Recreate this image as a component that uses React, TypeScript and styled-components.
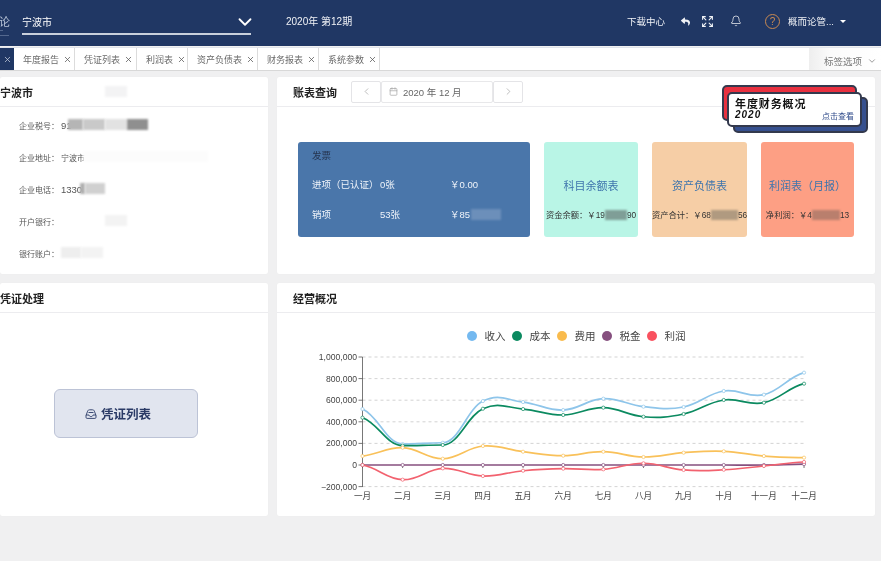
import React from "react";
import styled, { createGlobalStyle } from "styled-components";
import { Bell, Calendar, ChevronDown, ChevronLeft, ChevronRight, Expand, X } from "lucide-react";
import { FaReply } from "react-icons/fa";

const GlobalStyle = createGlobalStyle`
    html, body {
        margin: 0;
        padding: 0;
        background: #f0f0f1;
        overflow: hidden;
    }
    body, button {
        font-family: "Liberation Sans", "Noto Sans CJK SC", sans-serif;
    }
`;

const Page = styled.div`
    position: relative;
    width: 881px;
    height: 561px;
    overflow: hidden;
    background: #f0f0f1;
    filter: blur(0.3px);
`;

const Header = styled.header`
    position: relative;
    height: 46px;
    background: #203764;
    color: #fff;
`;

const LogoGlyph = styled.div`
    position: absolute;
    left: -1px;
    top: 14px;
    font-size: 11px;
    line-height: 16px;
    color: #b9c4d8;
`;

const LogoLine = styled.div`
    position: absolute;
    left: 0;
    top: ${(p: { $top: number; $width: number }) => p.$top}px;
    width: ${(p: { $top: number; $width: number }) => p.$width}px;
    height: 1px;
    background: #54688e;
`;

const CompanySelect = styled.div`
    position: absolute;
    left: 22px;
    top: 10px;
    width: 229px;
    height: 23px;
    border-bottom: 2px solid #c9d0dc;
    display: flex;
    align-items: center;
    justify-content: space-between;
    font-size: 10px;
    svg {
        margin-right: -5px;
    }
`;

const Period = styled.div`
    position: absolute;
    left: 286px;
    top: 15px;
    font-size: 10px;
    line-height: 14px;
    color: #f0f2f6;
`;

const HeaderTools = styled.div`
    position: absolute;
    top: 0;
    left: 627px;
    height: 42px;
    font-size: 9.5px;
    color: #f1f3f7;
`;

const ToolItem = styled.div`
    position: absolute;
    top: 0;
    left: ${(p: { $left: number }) => p.$left}px;
    height: 42px;
    display: flex;
    align-items: center;
    white-space: nowrap;
    gap: 4px;
`;

const HelpCircle = styled.span`
    width: 13px;
    height: 13px;
    border: 1px solid #c98a52;
    border-radius: 50%;
    color: #c98a52;
    font-size: 10px;
    line-height: 13px;
    text-align: center;
`;

const UserName = styled.span`
    margin-left: 4px;
`;

const Caret = styled.span`
    width: 0;
    height: 0;
    margin-left: 2px;
    border-left: 3px solid transparent;
    border-right: 3px solid transparent;
    border-top: 3px solid #fff;
`;

const TabBar = styled.nav`
    position: absolute;
    top: 47px;
    left: 0;
    right: 0;
    height: 24px;
    display: flex;
    background: #fff;
    border-top: 1px solid #dfe3ea;
    border-bottom: 1px solid #d8d8d8;
    box-sizing: border-box;
`;

const ActiveTab = styled.div`
    width: 14px;
    background: #203764;
    color: #c8d0df;
    display: flex;
    align-items: center;
    justify-content: center;
`;

const Tab = styled.div`
    width: ${(p: { $width: number }) => p.$width}px;
    box-sizing: border-box;
    border-right: 1px solid #dcdcdc;
    display: flex;
    align-items: center;
    padding-left: 9px;
    gap: 4px;
    font-size: 9px;
    color: #6a6a6a;
`;

const TabOptions = styled.div`
    position: absolute;
    right: 0;
    top: 0;
    bottom: 0;
    width: 72px;
    box-sizing: border-box;
    padding: 3px 0 0 15px;
    display: flex;
    align-items: center;
    gap: 5px;
    font-size: 9.5px;
    color: #777;
    background: linear-gradient(90deg, #eeeeee, #fbfbfb 30%, #fff);
`;

const Board = styled.main`
    position: absolute;
    left: 0;
    top: 77px;
    display: grid;
    grid-template-columns: 268px 598px;
    grid-template-rows: 197px 233px;
    column-gap: 9px;
    row-gap: 9px;
`;

const Card = styled.section`
    position: relative;
    background: #fff;
    border-radius: 2px;
    overflow: hidden;
    box-shadow: 0 0 1px rgba(0, 0, 0, 0.06);
`;

const CardHead = styled.div`
    height: 30px;
    box-sizing: border-box;
    border-bottom: 1px solid #ececef;
    display: flex;
    align-items: center;
    padding-left: ${(p: { $pad: number }) => p.$pad}px;
    font-size: 11px;
    font-weight: 700;
    color: #222;
`;

const InfoList = styled.div`
    padding: 2px 0 0 19px;
`;

const InfoRow = styled.div`
    position: relative;
    height: 32px;
    display: flex;
    align-items: center;
    font-size: 8px;
    color: #555;
    white-space: nowrap;
`;

const InfoLabel = styled.span`
    width: 42px;
    flex: none;
`;

const InfoNumber = styled.span`
    font-size: 9.5px;
`;

const Smudge = styled.span<{ $w: number; $x: number; $color: string }>`
    position: absolute;
    left: ${(p) => p.$x}px;
    top: 50%;
    width: ${(p) => p.$w}px;
    height: 11px;
    margin-top: -6px;
    background: ${(p) => p.$color};
    filter: blur(1px);
`;

const HeadSmudge = styled(Smudge)`
    top: 15px;
`;

const Pager = styled.div`
    display: flex;
    margin-left: 14px;
    font-weight: 400;
`;

const PagerButton = styled.div`
    width: 30px;
    height: 22px;
    box-sizing: border-box;
    border: 1px solid #e4e4e7;
    border-radius: 2px;
    display: flex;
    align-items: center;
    justify-content: center;
    color: #8a8a8a;
`;

const DateBox = styled.div`
    width: 112px;
    height: 22px;
    box-sizing: border-box;
    border: 1px solid #e8e8ea;
    border-radius: 2px;
    display: flex;
    align-items: center;
    gap: 5px;
    padding-left: 7px;
    font-size: 9.5px;
    color: #666;
`;

const ReportBadge = styled.div`
    position: absolute;
    left: 445px;
    top: 8px;
    width: 146px;
    height: 48px;
`;

const BadgeLayer = styled.div<{ $x: number; $y: number; $w: number; $h: number; $bg: string }>`
    position: absolute;
    left: ${(p) => p.$x}px;
    top: ${(p) => p.$y}px;
    width: ${(p) => p.$w}px;
    height: ${(p) => p.$h}px;
    box-sizing: border-box;
    background: ${(p) => p.$bg};
    border: 2px solid #33394d;
    border-radius: 5px;
`;

const BadgeTitle = styled.div`
    position: absolute;
    left: 6px;
    top: 4px;
    font-size: 11px;
    line-height: 12px;
    font-weight: 700;
    letter-spacing: 0.9px;
    color: #111;
`;

const BadgeYear = styled.div`
    position: absolute;
    left: 6px;
    top: 15px;
    font-size: 10px;
    line-height: 12px;
    font-weight: 700;
    font-style: italic;
    letter-spacing: 1px;
    color: #111;
`;

const BadgeLink = styled.div`
    position: absolute;
    right: 6px;
    top: 18px;
    font-size: 8px;
    line-height: 10px;
    color: #2f4b8a;
`;

const InvoicePanel = styled.div`
    position: absolute;
    left: 21px;
    top: 65px;
    width: 232px;
    height: 95px;
    border-radius: 3px;
    background: #4a76aa;
    color: #f0f4fa;
    font-size: 9.5px;
`;

const InvoiceTitle = styled.div`
    position: absolute;
    left: 14px;
    top: 7px;
    line-height: 14px;
    color: #25344f;
`;

const InvoiceRow = styled.div`
    position: absolute;
    left: 14px;
    top: ${(p: { $top: number }) => p.$top}px;
    display: grid;
    grid-template-columns: 68px 70px 1fr;
    width: 210px;
    line-height: 14px;
`;

const StatCard = styled.div<{ $x: number; $w: number; $bg: string }>`
    position: absolute;
    left: ${(p) => p.$x}px;
    top: 65px;
    width: ${(p) => p.$w}px;
    height: 95px;
    border-radius: 3px;
    background: ${(p) => p.$bg};
    overflow: hidden;
`;

const StatTitle = styled.div`
    position: absolute;
    left: 0;
    right: 0;
    top: 36px;
    text-align: center;
    font-size: 11px;
    line-height: 16px;
    color: #3f75ad;
`;

const StatLine = styled.div`
    position: absolute;
    left: 0;
    right: 0;
    top: 67px;
    display: flex;
    justify-content: center;
    white-space: nowrap;
    font-size: 8.3px;
    line-height: 12px;
    color: #333;
`;

const StatGap = styled.span<{ $w: number; $color: string }>`
    flex: none;
    width: ${(p) => p.$w}px;
    height: 10px;
    margin-top: 1px;
    background: ${(p) => p.$color};
    filter: blur(1px);
`;

const InvoiceSmudge = styled.span`
    position: absolute;
    left: 173px;
    top: 67px;
    width: 30px;
    height: 11px;
    background: #6c8fba;
    filter: blur(1px);
`;

const VoucherButton = styled.button`
    position: absolute;
    left: 54px;
    top: 106px;
    width: 144px;
    height: 49px;
    box-sizing: border-box;
    background: #e1e5ef;
    border: 1px solid #bcc3d6;
    border-radius: 6px;
    display: flex;
    align-items: center;
    gap: 4px;
    padding: 0 0 0 30px;
    font-size: 12.5px;
    font-weight: 700;
    color: #2a3a66;
`;

const ChartSvg = styled.svg`
    position: absolute;
    left: 0;
    top: 0;
    width: 598px;
    height: 233px;
    font-family: "Liberation Sans", "Noto Sans CJK SC", sans-serif;
`;

const months = ["一月", "二月", "三月", "四月", "五月", "六月", "七月", "八月", "九月", "十月", "十一月", "十二月"];

// flat: months where the curve runs level through the point
const series = [
    { name: "税金", color: "#86507f", flat: [], data: [0, 0, 0, 0, 0, 0, 0, 0, 0, 0, 0, 8000] },
    { name: "收入", color: "#8ec5ea", flat: [1, 2], data: [518000, 194000, 206000, 592000, 583000, 509000, 614000, 540000, 537000, 685000, 651000, 855000] },
    { name: "成本", color: "#0b8a60", flat: [1, 2], data: [438000, 179000, 185000, 521000, 518000, 463000, 531000, 447000, 472000, 602000, 577000, 753000] },
    { name: "费用", color: "#f9c15a", flat: [], data: [83000, 160000, 58000, 176000, 123000, 86000, 123000, 74000, 114000, 127000, 83000, 68000] },
    { name: "利润", color: "#f2626f", flat: [], data: [0, -136000, -31000, -102000, -53000, -34000, -40000, 16000, -46000, -44000, -9000, 28000] },
];

const legendOrder = [
    { name: "收入", color: "#74b9f0", x: 472 },
    { name: "成本", color: "#0b8a60", x: 517 },
    { name: "费用", color: "#f9bb4d", x: 562 },
    { name: "税金", color: "#86507f", x: 607 },
    { name: "利润", color: "#f9515f", x: 652 },
];

const axisX = (i: number) => 362.5 + i * 40.14;
const axisY = (v: number) => 465 - (v / 200000) * 21.6;

function smoothPath(data: number[], flat: number[]) {
    const pts = data.map((v, i) => [axisX(i), axisY(v)]);
    const k = 0.2;
    const slope = (i: number) => {
        if (flat.includes(i)) return 0;
        const a = pts[Math.max(i - 1, 0)];
        const b = pts[Math.min(i + 1, pts.length - 1)];
        return (b[1] - a[1]) * k;
    };
    let d = `M${pts[0][0]} ${pts[0][1]}`;
    for (let i = 0; i < pts.length - 1; i++) {
        const p1 = pts[i];
        const p2 = pts[i + 1];
        const dx = (p2[0] - p1[0]) * 0.4;
        d += `C${p1[0] + dx} ${p1[1] + slope(i)} ${p2[0] - dx} ${p2[1] - slope(i + 1)} ${p2[0]} ${p2[1]}`;
    }
    return d;
}

function OverviewChart() {
    const ticks = [1000000, 800000, 600000, 400000, 200000, 0, -200000];
    return (
        <ChartSvg viewBox="277 283 598 233">
            {legendOrder.map((l) => (
                <g key={l.name}>
                    <circle cx={l.x} cy={336} r={5} fill={l.color} />
                    <text x={l.x + 12.5} y={340} fontSize={10.5} fill="#444">{l.name}</text>
                </g>
            ))}
            {ticks.map((t) => (
                <g key={t}>
                    {t !== 0 && (
                        <line x1={362.5} x2={804} y1={axisY(t)} y2={axisY(t)} stroke="#c8c8c8" strokeWidth={0.8} strokeDasharray="3 3" />
                    )}
                    <line x1={358.5} x2={362.5} y1={axisY(t)} y2={axisY(t)} stroke="#555" strokeWidth={0.8} />
                    <text x={357} y={axisY(t) + 3} fontSize={8.6} fill="#444" textAnchor="end">
                        {t.toLocaleString("en-US").replace("-", "\u2212")}
                    </text>
                </g>
            ))}
            <line x1={362.5} x2={362.5} y1={357} y2={487} stroke="#555" strokeWidth={0.8} />
            {months.map((m, i) => (
                <g key={m}>
                    <line x1={axisX(i)} x2={axisX(i)} y1={465} y2={468} stroke="#555" strokeWidth={0.8} />
                    <text x={axisX(i)} y={499} fontSize={8.6} fill="#444" textAnchor="middle">{m}</text>
                </g>
            ))}
            {series.map((s) => (
                <g key={s.name}>
                    <path d={smoothPath(s.data, s.flat)} fill="none" stroke={s.color} strokeWidth={1.7} />
                    {s.data.map((v, i) => (
                        <circle key={i} cx={axisX(i)} cy={axisY(v)} r={1.6} fill="#fff" stroke={s.color} strokeWidth={0.7} />
                    ))}
                </g>
            ))}
        </ChartSvg>
    );
}

function InboxIcon() {
    return (
        <svg width="12" height="12" viewBox="0 0 12 12" fill="none" stroke="#2a3a66" strokeWidth="0.9">
            <path d="M1.2 7 2.6 3.2C3 2.2 3.6 1.8 4.5 1.8h3c.9 0 1.5.4 1.9 1.4L10.8 7" />
            <path d="M1 7h3c.2 1 1 1.6 2 1.6S7.8 8 8 7h3v2.3c0 .7-.4 1.1-1.1 1.1H2.1C1.4 10.4 1 10 1 9.3z" />
            <path d="M3.5 4.500h5" />
        </svg>
    );
}

const tabs = [
    { name: "年度报告", width: 61 },
    { name: "凭证列表", width: 62 },
    { name: "利润表", width: 51 },
    { name: "资产负债表", width: 70 },
    { name: "财务报表", width: 61 },
    { name: "系统参数", width: 61 },
];

export default function App() {
    return (
        <Page>
            <GlobalStyle />
            <Header>
                <LogoGlyph>论</LogoGlyph>
                <LogoLine $top={30} $width={3} />
                <LogoLine $top={35} $width={9} />
                <CompanySelect>
                    宁波市
                    <ChevronDown size={22} strokeWidth={2} />
                </CompanySelect>
                <Period>2020年 第12期</Period>
                <HeaderTools>
                    <ToolItem $left={0}>下载中心</ToolItem>
                    <ToolItem $left={54}><FaReply size={9} /></ToolItem>
                    <ToolItem $left={74}><Expand size={13} /></ToolItem>
                    <ToolItem $left={103}><Bell size={12} color="#fff" strokeWidth={1.4} /></ToolItem>
                    <ToolItem $left={138}>
                        <HelpCircle>?</HelpCircle>
                        <UserName>概而论管...</UserName>
                        <Caret />
                    </ToolItem>
                </HeaderTools>
            </Header>
            <TabBar>
                <ActiveTab><X size={9} /></ActiveTab>
                {tabs.map((t) => (
                    <Tab key={t.name} $width={t.width}>
                        {t.name}
                        <X size={9} color="#555" />
                    </Tab>
                ))}
                <TabOptions>
                    标签选项
                    <ChevronDown size={10} color="#888" />
                </TabOptions>
            </TabBar>
            <Board>
                <Card>
                    <CardHead $pad={0}>宁波市</CardHead>
                    <HeadSmudge $x={105} $w={22} $color="#f3f3f4" />
                    <InfoList>
                        <InfoRow>
                            <InfoLabel>企业税号：</InfoLabel><InfoNumber>91</InfoNumber>
                            <Smudge $x={49} $w={15} $color="#b5b5b5" />
                            <Smudge $x={64} $w={22} $color="#c9c9c9" />
                            <Smudge $x={86} $w={22} $color="#e2e2e2" />
                            <Smudge $x={108} $w={21} $color="#8f8f8f" />
                        </InfoRow>
                        <InfoRow>
                            <InfoLabel>企业地址：</InfoLabel>宁波市
                            <Smudge $x={64} $w={125} $color="#fcfcfc" />
                        </InfoRow>
                        <InfoRow>
                            <InfoLabel>企业电话：</InfoLabel><InfoNumber>1330</InfoNumber>
                            <Smudge $x={61} $w={5} $color="#b0b0b0" />
                            <Smudge $x={66} $w={20} $color="#d0d0d0" />
                        </InfoRow>
                        <InfoRow>
                            <InfoLabel>开户银行：</InfoLabel>
                            <Smudge $x={86} $w={22} $color="#f3f3f3" />
                        </InfoRow>
                        <InfoRow>
                            <InfoLabel>银行账户：</InfoLabel>
                            <Smudge $x={42} $w={20} $color="#eeeeee" />
                            <Smudge $x={62} $w={22} $color="#f3f3f3" />
                        </InfoRow>
                    </InfoList>
                </Card>
                <Card>
                    <CardHead $pad={16}>
                        账表查询
                        <Pager>
                            <PagerButton><ChevronLeft size={11} strokeWidth={1.2} /></PagerButton>
                            <DateBox>
                                <Calendar size={9} color="#aaa" />
                                2020 年 12 月
                            </DateBox>
                            <PagerButton><ChevronRight size={11} strokeWidth={1.2} /></PagerButton>
                        </Pager>
                    </CardHead>
                    <ReportBadge>
                        <BadgeLayer $x={0} $y={0} $w={135} $h={36} $bg="#e8303f" />
                        <BadgeLayer $x={11} $y={12} $w={135} $h={36} $bg="#36508f" />
                        <BadgeLayer $x={5} $y={7} $w={135} $h={35} $bg="#fff">
                            <BadgeTitle>年度财务概况</BadgeTitle>
                            <BadgeYear>2020</BadgeYear>
                            <BadgeLink>点击查看</BadgeLink>
                        </BadgeLayer>
                    </ReportBadge>
                    <InvoicePanel>
                        <InvoiceTitle>发票</InvoiceTitle>
                        <InvoiceRow $top={36}>
                            <span>进项（已认证）</span><span>0张</span><span>￥0.00</span>
                        </InvoiceRow>
                        <InvoiceRow $top={66}>
                            <span>销项</span><span>53张</span><span>￥85</span>
                        </InvoiceRow>
                        <InvoiceSmudge />
                    </InvoicePanel>
                    <StatCard $x={267} $w={94} $bg="#b9f5e6">
                        <StatTitle>科目余额表</StatTitle>
                        <StatLine>资金余额：￥19<StatGap $w={22} $color="#7f9e97" />90</StatLine>
                    </StatCard>
                    <StatCard $x={375} $w={95} $bg="#f6cea6">
                        <StatTitle>资产负债表</StatTitle>
                        <StatLine>资产合计：￥68<StatGap $w={27} $color="#b09a80" />56</StatLine>
                    </StatCard>
                    <StatCard $x={484} $w={93} $bg="#fd9f84">
                        <StatTitle>利润表（月报）</StatTitle>
                        <StatLine>净利润：￥4<StatGap $w={28} $color="#b97f6d" />13</StatLine>
                    </StatCard>
                </Card>
                <Card>
                    <CardHead $pad={0}>凭证处理</CardHead>
                    <VoucherButton>
                        <InboxIcon />
                        凭证列表
                    </VoucherButton>
                </Card>
                <Card>
                    <CardHead $pad={16}>经营概况</CardHead>
                    <OverviewChart />
                </Card>
            </Board>
        </Page>
    );
}
